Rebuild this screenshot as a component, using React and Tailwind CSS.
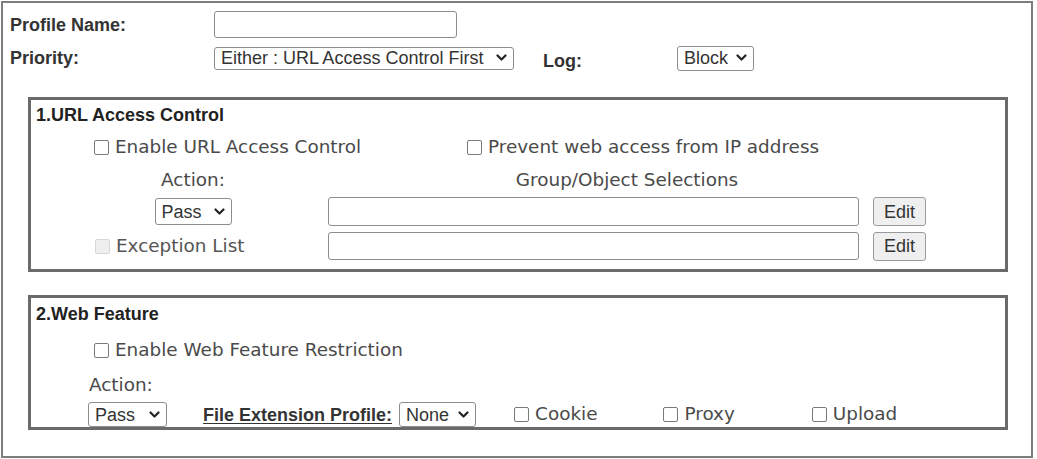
import React from 'react';

const Chevron = () => (
  <svg width="11" height="8" viewBox="0 0 11 8" className="shrink-0">
    <path d="M1.5 1.5 L5.5 5.5 L9.5 1.5" fill="none" stroke="#222" strokeWidth="2.2" strokeLinecap="round" strokeLinejoin="round" />
  </svg>
);

const Select = ({ value, w, h = 'h-[24px]' }) => (
  <div className={`${w} ${h} flex items-center justify-between pl-[6px] pr-[6px] border border-[#8d8d8d] rounded-[3px] bg-white text-[18px] text-[#333] font-['Liberation_Sans',Arial,sans-serif] leading-none`}>
    <span>{value}</span>
    <Chevron />
  </div>
);

const Box = ({ disabled }) => (
  <span
    className={`inline-block w-[15px] h-[15px] shrink-0 rounded-[2px] border ${
      disabled ? 'border-[#d6d6d6] bg-[#efefef]' : 'border-[#7a7a7a] bg-white'
    }`}
  />
);

const Check = ({ label, disabled }) => (
  <label className="flex items-center gap-[6px] font-['DejaVu_Sans',Verdana,sans-serif] text-[18.4px] leading-none text-[#4a4a4a]">
    <Box disabled={disabled} />
    <span className={disabled ? 'text-[#555]' : ''}>{label}</span>
  </label>
);

const TextBox = ({ w, h }) => (
  <div className={`${w} ${h} border border-[#8d8d8d] rounded-[3px] bg-white`} />
);

const EditBtn = () => (
  <button className="w-[53px] h-[29px] flex items-center justify-center border border-[#9a9a9a] rounded-[3px] bg-[#efefef] text-[18px] text-[#333] font-['Liberation_Sans',Arial,sans-serif] leading-none">
    Edit
  </button>
);

const sectionCls = "ml-[25px] w-[980px] border-[3px] border-[#6a6a6a] bg-white";

export default function App() {
  return (
    <div className="w-[1037px] h-[459px] bg-white pt-[1px] pl-[1px] font-['Liberation_Sans',Arial,sans-serif]">
      <div className="w-[1032px] h-[457px] border-2 border-[#7d7d7d] pt-[8px]">
        {/* Profile name */}
        <div className="flex items-center pl-[7px] h-[27px]">
          <div className="w-[204px] text-[18px] font-bold text-[#333] leading-none">Profile Name:</div>
          <TextBox w="w-[243px]" h="h-[27px]" />
        </div>

        {/* Priority / Log */}
        <div className="flex items-center pl-[7px] mt-[8px] h-[24px]">
          <div className="w-[204px] text-[18px] font-bold text-[#333] leading-none">Priority:</div>
          <Select value="Either : URL Access Control First" w="w-[300px]" h="h-[23px]" />
          <div className="ml-[29px] w-[134px] text-[18px] font-bold text-[#333] leading-none pt-[6px]">Log:</div>
          <Select value="Block" w="w-[77px]" h="h-[25px]" />
        </div>

        {/* 1. URL Access Control */}
        <div className={`${sectionCls} mt-[27px] h-[175px]`}>
          <div className="h-[30px] flex items-center pl-[5px] text-[18px] font-bold text-[#222]">1.URL Access Control</div>
          <div className="h-[34px] flex items-center pl-[63px]">
            <div className="w-[373px]">
              <Check label="Enable URL Access Control" />
            </div>
            <Check label="Prevent web access from IP address" />
          </div>
          <div className="h-[33px] flex items-center pl-[63px] font-['DejaVu_Sans',Verdana,sans-serif] text-[18.4px] text-[#4a4a4a] leading-none">
            <div className="w-[198px] text-center">Action:</div>
            <div className="ml-[36px] w-[598px] text-center">Group/Object Selections</div>
          </div>
          <div className="h-[29px] flex items-center pl-[63px]">
            <div className="w-[198px] flex justify-center">
              <Select value="Pass" w="w-[77px]" h="h-[27px]" />
            </div>
            <div className="ml-[36px]">
              <TextBox w="w-[531px]" h="h-[29px]" />
            </div>
            <div className="ml-[14px]">
              <EditBtn />
            </div>
          </div>
          <div className="h-[28px] mt-[6px] flex items-center pl-[64px]">
            <div className="w-[197px]">
              <Check label="Exception List" disabled />
            </div>
            <div className="ml-[36px]">
              <TextBox w="w-[531px]" h="h-[28px]" />
            </div>
            <div className="ml-[14px]">
              <EditBtn />
            </div>
          </div>
        </div>

        {/* 2. Web Feature */}
        <div className={`${sectionCls} mt-[23px] h-[135px]`}>
          <div className="h-[32px] flex items-center pl-[5px] text-[18px] font-bold text-[#222]">2.Web Feature</div>
          <div className="h-[40px] flex items-center pl-[63px]">
            <Check label="Enable Web Feature Restriction" />
          </div>
          <div className="h-[30px] flex items-center pl-[58px] font-['DejaVu_Sans',Verdana,sans-serif] text-[18.4px] text-[#4a4a4a] leading-none">
            Action:
          </div>
          <div className="h-[25px] mt-[2px] flex items-center pl-[57px]">
            <Select value="Pass" w="w-[79px]" h="h-[25px]" />
            <span className="ml-[36px] text-[18px] font-bold text-[#333] underline underline-offset-2 leading-none">File Extension Profile:</span>
            <div className="ml-[7px]">
              <Select value="None" w="w-[77px]" h="h-[25px]" />
            </div>
            <div className="ml-[38px]">
              <Check label="Cookie" />
            </div>
            <div className="ml-[66px]">
              <Check label="Proxy" />
            </div>
            <div className="ml-[77px]">
              <Check label="Upload" />
            </div>
          </div>
        </div>
      </div>
    </div>
  );
}
